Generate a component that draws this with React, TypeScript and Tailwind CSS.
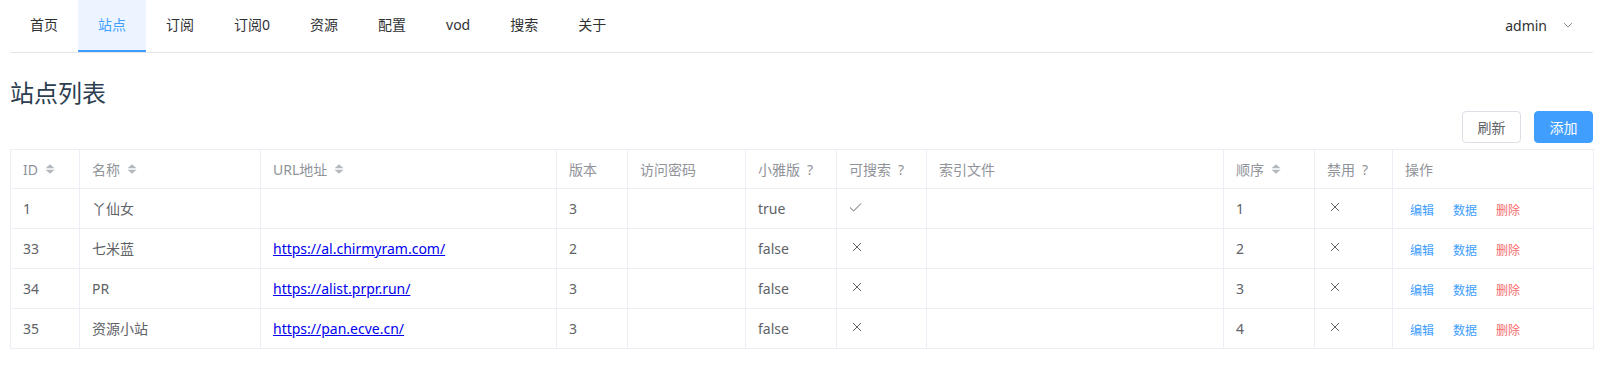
import React from 'react';

const navItems = ['首页', '站点', '订阅', '订阅0', '资源', '配置', 'vod', '搜索', '关于'];

type Site = {
  id: number;
  name: string;
  url: string;
  version: number;
  xiaoya: string;
  searchable: boolean;
  order: number;
};

const sites: Site[] = [
  { id: 1, name: '丫仙女', url: '', version: 3, xiaoya: 'true', searchable: true, order: 1 },
  { id: 33, name: '七米蓝', url: 'https://al.chirmyram.com/', version: 2, xiaoya: 'false', searchable: false, order: 2 },
  { id: 34, name: 'PR', url: 'https://alist.prpr.run/', version: 3, xiaoya: 'false', searchable: false, order: 3 },
  { id: 35, name: '资源小站', url: 'https://pan.ecve.cn/', version: 3, xiaoya: 'false', searchable: false, order: 4 },
];

const SortCaret = () => (
  <svg width="10" height="10" viewBox="0 0 10 10" className="ml-[7px] inline-block">
    <polygon points="0.5,4.3 5,0.3 9.5,4.3" fill="#b4b8bf" />
    <polygon points="0.5,5.7 5,9.7 9.5,5.7" fill="#b4b8bf" />
  </svg>
);

const CheckIcon = () => (
  <svg width="13" height="10" viewBox="0 0 13 10" className="mt-[-4px]">
    <polyline points="1,5.5 4.6,9 12,1.5" fill="none" stroke="#606266" strokeWidth="1" />
  </svg>
);

const CloseIcon = () => (
  <svg width="10" height="10" viewBox="0 0 10 10" className="ml-[3px] mt-[-4px]">
    <line x1="1" y1="1" x2="9" y2="9" stroke="#606266" strokeWidth="1" />
    <line x1="9" y1="1" x2="1" y2="9" stroke="#606266" strokeWidth="1" />
  </svg>
);

// full-width question mark, centred in its cell as in the reference
const Q = () => <span className="inline-block w-[14px] text-center ml-[3px] font-['Noto_Sans','Noto_Sans_CJK_TC',sans-serif]">?</span>;

const Th = ({ children, sort }: { children: React.ReactNode; sort?: boolean }) => (
  <th className="h-[39px] border border-[#ebeef5] pl-[12px] text-left font-normal text-[14px] text-[#909399]">
    <div className="flex items-center">
      <span>{children}</span>
      {sort && <SortCaret />}
    </div>
  </th>
);

const Td = ({ children }: { children?: React.ReactNode }) => (
  <td className="h-[40px] border border-[#ebeef5] pl-[12px] text-[14px] text-[#606266]">{children}</td>
);

export default function App() {
  return (
    <div className="w-[1606px] h-[373px] bg-white font-['Noto_Sans','Noto_Sans_CJK_SC',sans-serif]">
      <div className="ml-[10px] w-[1583px]">
        {/* top menu */}
        <nav className="flex h-[53px] border-b border-[#e6e6e6]">
          {navItems.map((item) => (
            <div
              key={item}
              className={
                item === '站点'
                  ? 'flex h-[52px] items-center border-b-2 border-[#409eff] bg-[#ecf5ff] px-5 pb-[2px] text-[14px] text-[#409eff]'
                  : 'flex h-[52px] items-center border-b-2 border-transparent px-5 pb-[2px] text-[14px] text-[#303133]'
              }
            >
              {item}
            </div>
          ))}
          <div className="ml-auto flex h-[52px] items-center px-5 pb-[2px] text-[14px] text-[#303133]">
            admin
            <svg width="10" height="6" viewBox="0 0 10 6" className="ml-[16px]">
              <polyline points="1,1 5,5 9,1" fill="none" stroke="#909399" strokeWidth="1" />
            </svg>
          </div>
        </nav>

        <h2 className="mt-[24px] h-[32px] text-[24px] leading-[32px] font-normal text-[#2c3e50]">站点列表</h2>

        <div className="mt-[2px] flex justify-end gap-[13px]">
          <button className="h-[32px] w-[59px] rounded-[4px] border border-[#dcdfe6] bg-white text-[14px] text-[#606266]">
            刷新
          </button>
          <button className="h-[32px] w-[59px] rounded-[4px] border border-[#409eff] bg-[#409eff] text-[14px] text-white">
            添加
          </button>
        </div>

        <table className="mt-[6px] w-full table-fixed border-collapse border border-[#ebeef5]">
          <colgroup>
            <col className="w-[69px]" />
            <col className="w-[181px]" />
            <col className="w-[296px]" />
            <col className="w-[71px]" />
            <col className="w-[118px]" />
            <col className="w-[91px]" />
            <col className="w-[90px]" />
            <col className="w-[297px]" />
            <col className="w-[91px]" />
            <col className="w-[78px]" />
            <col className="w-[201px]" />
          </colgroup>
          <thead>
            <tr>
              <Th sort>ID</Th>
              <Th sort>名称</Th>
              <Th sort>URL地址</Th>
              <Th>版本</Th>
              <Th>访问密码</Th>
              <Th>
                小雅版<Q />
              </Th>
              <Th>
                可搜索<Q />
              </Th>
              <Th>索引文件</Th>
              <Th sort>顺序</Th>
              <Th>
                禁用<Q />
              </Th>
              <Th>操作</Th>
            </tr>
          </thead>
          <tbody>
            {sites.map((s) => (
              <tr key={s.id}>
                <Td>{s.id}</Td>
                <Td>{s.name}</Td>
                <Td>
                  {s.url && (
                    <a href={s.url} className="text-[#0000ee] underline">
                      {s.url}
                    </a>
                  )}
                </Td>
                <Td>{s.version}</Td>
                <Td />
                <Td>{s.xiaoya}</Td>
                <Td>
                  <div className="flex items-center">{s.searchable ? <CheckIcon /> : <CloseIcon />}</div>
                </Td>
                <Td />
                <Td>{s.order}</Td>
                <Td>
                  <div className="flex items-center">
                    <CloseIcon />
                  </div>
                </Td>
                <Td>
                  <div className="flex items-center gap-[19px] pl-[5px] pt-[4px] text-[12px]">
                    <span className="text-[#409eff]">编辑</span>
                    <span className="text-[#409eff]">数据</span>
                    <span className="text-[#f56c6c]">删除</span>
                  </div>
                </Td>
              </tr>
            ))}
          </tbody>
        </table>
      </div>
    </div>
  );
}
